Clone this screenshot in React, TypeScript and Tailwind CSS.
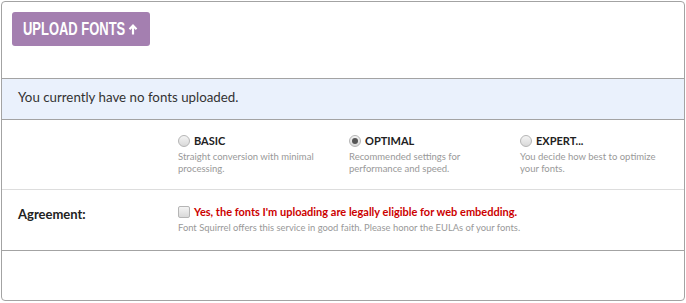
import React from 'react';

interface Mode {
  name: string;
  desc: string;
  checked: boolean;
}

const modes: Mode[] = [
  { name: 'BASIC', desc: 'Straight conversion with minimal processing.', checked: false },
  { name: 'OPTIMAL', desc: 'Recommended settings for performance and speed.', checked: true },
  { name: 'EXPERT...', desc: 'You decide how best to optimize your fonts.', checked: false },
];

const sans = "font-['Lato','Open_Sans',sans-serif]";

const Radio = ({ checked }: { checked: boolean }) => (
  <span className="flex h-[12px] w-[12px] shrink-0 items-center justify-center rounded-full border border-[#b5b5b5] bg-gradient-to-b from-[#f4f4f4] to-[#d9d9d9]">
    {checked && <span className="h-[6px] w-[6px] rounded-full bg-[#555]" />}
  </span>
);

export default function App() {
  return (
    <div className={`m-px h-[300px] w-[684px] rounded-[4px] border border-[#a3a3a3] bg-white ${sans}`}>
      <div className="h-[76px] px-[10px] pt-[10px]">
        <button className="flex h-[34px] w-[138px] items-center rounded-[3px] bg-[#a47fb0] pl-[11px] text-white">
          <span className="w-[96px] shrink-0 whitespace-nowrap text-left">
            <span className="inline-block origin-left scale-x-[0.72] font-['Liberation_Sans',sans-serif] text-[18px] font-bold">
              UPLOAD FONTS
            </span>
          </span>
          <svg className="ml-[9px] shrink-0" width="10" height="11" viewBox="0 0 10 11" fill="none" stroke="white" strokeWidth="2.2">
            <path d="M5 10.5V2M1.5 5.2L5 1.6l3.5 3.6" />
          </svg>
        </button>
      </div>

      <div className="flex h-[42px] items-center border-y border-[#a3a3a3] bg-[#eaf1fc] pb-[2px] pl-[16px] text-[13.3px] text-[#333]">
        You currently have no fonts uploaded.
      </div>

      <div className="flex h-[70px] border-b border-[#dddddd] pl-[176px] pt-[13px]">
        {modes.map((m) => (
          <div key={m.name} className="w-[171px] shrink-0 last:w-auto">
            <div className="flex items-center gap-[4px]">
              <Radio checked={m.checked} />
              <span className="text-[11px] font-bold text-[#222]">{m.name}</span>
            </div>
            <p className="mt-[1px] w-[145px] text-[9.5px] leading-[12px] text-[#999]">{m.desc}</p>
          </div>
        ))}
      </div>

      <div className="flex h-[61px] border-b border-[#a3a3a3] pt-[14px]">
        <div className="w-[176px] shrink-0 pl-[16px] pt-[1px] text-[13px] font-bold text-[#222]">Agreement:</div>
        <div>
          <div className="flex items-center gap-[4px]">
            <span className="h-[12px] w-[12px] rounded-[2px] border border-[#b5b5b5] bg-gradient-to-b from-[#f4f4f4] to-[#d9d9d9]" />
            <span className="text-[11px] font-bold text-[#cc0000]">
              Yes, the fonts I'm uploading are legally eligible for web embedding.
            </span>
          </div>
          <p className="mt-0 text-[9.4px] text-[#999]">
            Font Squirrel offers this service in good faith. Please honor the EULAs of your fonts.
          </p>
        </div>
      </div>
    </div>
  );
}
